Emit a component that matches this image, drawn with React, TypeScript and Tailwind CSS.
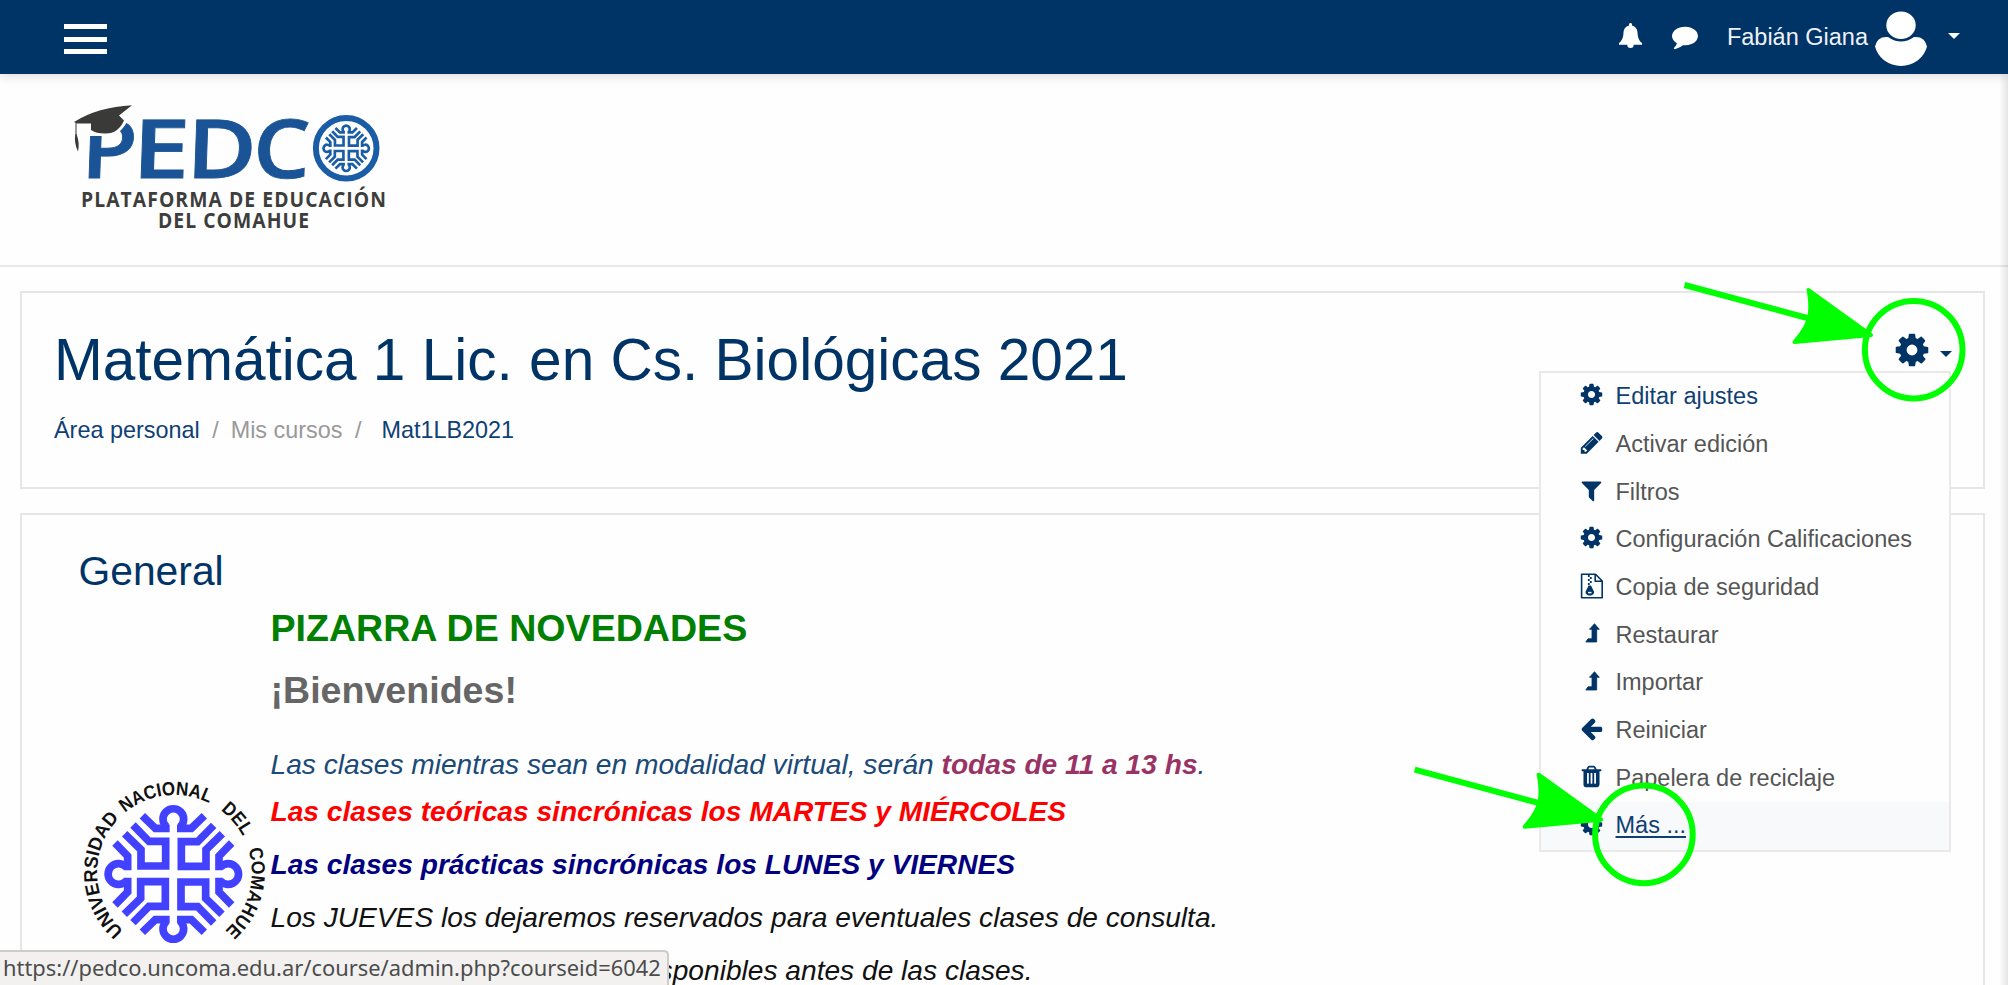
import React from "react";

const COG =
  "M1152 896q0-106-75-181t-181-75-181 75-75 181 75 181 181 75 181-75 75-181zm512-109v222q0 12-8 23t-20 13l-185 28q-19 54-39 91 35 50 107 138 10 12 10 25t-9 23q-27 37-99 108t-94 71q-12 0-26-9l-138-108q-44 23-91 38-16 136-29 186-7 28-36 28h-222q-14 0-24.5-8.5t-11.5-21.5l-28-184q-49-16-90-37l-141 107q-10 9-25 9-14 0-25-11-126-114-165-168-7-10-7-23 0-12 8-23 15-21 51-66.5t54-70.5q-27-50-41-99l-183-27q-13-2-21-12.5t-8-23.5v-222q0-12 8-23t19-13l186-28q14-46 39-92-40-57-107-138-10-12-10-24 0-10 9-23 26-36 98.5-107.5t94.5-71.5q13 0 26 10l138 107q44-23 91-38 16-136 29-186 7-28 36-28h222q14 0 24.5 8.5t11.5 21.5l28 184q49 16 90 37l142-107q9-9 24-9 13 0 25 10 129 119 165 170 7 8 7 22 0 12-8 23-15 21-51 66.5t-54 70.5q26 50 41 98l183 28q13 2 21 12.5t8 23.5z";
const PENCIL =
  "M491 1536l91-91-235-235-91 91v107h128v128h107zm523-928q0-22-22-22-10 0-17 7l-542 542q-7 7-7 17 0 22 22 22 10 0 17-7l542-542q7-7 7-17zm-54-192l416 416-832 832h-416v-416zm683 96q0 53-37 90l-166 166-416-416 166-165q36-38 90-38 53 0 91 38l235 234q37 39 37 91z";
const FILTER =
  "M1595 295q17 41-14 70l-493 493v742q0 42-39 59-13 5-25 5-27 0-45-19l-256-256q-19-19-19-45v-486l-493-493q-31-29-14-70 17-39 59-39h1280q42 0 59 39z";
const ARROW_LEFT =
  "M1664 896v128q0 53-32.5 90.5t-84.5 37.5h-704l293 294q38 36 38 90t-38 90l-75 76q-37 37-90 37-52 0-91-37l-651-652q-37-37-37-90 0-52 37-91l651-650q38-38 91-38 52 0 90 38l75 74q38 38 38 91t-38 91l-293 293h704q52 0 84.5 37.5t32.5 90.5z";
const TRASH =
  "M704 1376v-704q0-14-9-23t-23-9h-64q-14 0-23 9t-9 23v704q0 14 9 23t23 9h64q14 0 23-9t9-23zm256 0v-704q0-14-9-23t-23-9h-64q-14 0-23 9t-9 23v704q0 14 9 23t23 9h64q14 0 23-9t9-23zm256 0v-704q0-14-9-23t-23-9h-64q-14 0-23 9t-9 23v704q0 14 9 23t23 9h64q14 0 23-9t9-23zm-544-992h448l-48-117q-7-9-17-11h-317q-10 2-17 11zm928 32v64q0 14-9 23t-23 9h-96v948q0 83-47 143.5t-113 60.5h-832q-66 0-113-58.5t-47-141.5v-952h-96q-14 0-23-9t-9-23v-64q0-14 9-23t23-9h309l70-167q15-37 54-63t79-26h320q40 0 79 26t54 63l70 167h309q14 0 23 9t9 23z";
const COMMENT =
  "M1792 896q0 174-120 321.5t-326 233-450 85.5q-70 0-145-8-198 175-460 242-49 14-114 22-17 2-30.5-9t-17.5-29v-1q-3-4-.5-12t2-10 4.5-9.5l6-9 7-8.5 8-9q7-8 31-34.5t34.5-38 31-39.5 32.5-51 27-59 26-76q-157-89-247.5-220t-90.5-281q0-130 71-248.5t191-204.5 286-136.5 348-50.5q244 0 450 85.5t326 233 120 321.5z";

function Glyph({ d, className }: { d: string; className: string }) {
  return (
    <svg viewBox="0 0 1792 1792" className={className} fill="currentColor" aria-hidden="true">
      <path d={d} />
    </svg>
  );
}

function LevelUpIcon() {
  return (
    <svg viewBox="0 0 16 20" className="ml-[3px] h-5 w-4" fill="currentColor" aria-hidden="true">
      <path
        d="M9.500 .7L14.300 6.300H11.700V19H.8L3 15.800H7V6.300H4.500Z"
        stroke="currentColor"
        strokeWidth=".8"
        strokeLinejoin="round"
      />
    </svg>
  );
}

function ZipIcon() {
  return (
    <svg viewBox="0 0 24 26" className="h-[26px] w-6" fill="none" stroke="currentColor" strokeWidth="1.6" aria-hidden="true">
      <path d="M1.6 1.3H15.5L22.2 8V24.7H1.6Z M15.2 1.5V8.3H22" strokeLinejoin="round" />
      <path d="M8.8 2v2M10.8 4v2M8.8 6v2M10.8 8v2M8.8 10v2" strokeWidth="1.8" />
      <path d="M8.600 12.600h2.400l2.800 5.600c.9 2.600-1.200 4.200-4 4.200s-4.900-1.600-4-4.200z" fill="currentColor" stroke="none" />
      <path d="M8.100 19.600h3.400" stroke="#fff" strokeWidth="1.500" />
    </svg>
  );
}

/** The university's four-fold cross, drawn around the origin in a 416-unit square. */
function Cross({ color }: { color: string }) {
  return (
    <g fill="none" stroke={color} strokeWidth="23">
      {[0, 90, 180, 270].map((a) => (
        <g key={a} transform={`rotate(${a})`}>
          <path d="M-121 -147 L-73 -98 H-23 V-24 H-97 V-73 L-146 -121" />
          <path d="M-93 -175 L-54 -137 H-11" />
          <path d="M93 -175 L54 -137 H11" />
          <path d="M-20 -141 A31 31 0 1 1 20 -141" />
        </g>
      ))}
    </g>
  );
}

function PedcoLogo() {
  return (
    <svg viewBox="70 75 330 175" className="h-[175px] w-[330px]" role="img" aria-label="PEDCO">
      <g
        fill="#1b5496"
        stroke="#1b5496"
        strokeWidth=".8"
        fontFamily="'Open Sans', 'Noto Sans', sans-serif"
        fontWeight="600"
        fontSize="81.500"
      >
        <text transform="translate(80.500 178) skewX(-2)" textLength="56" lengthAdjust="spacingAndGlyphs">P</text>
        <text transform="translate(131.500 178) skewX(-2)" textLength="57.500" lengthAdjust="spacingAndGlyphs">E</text>
        <text transform="translate(185.700 178) skewX(-2)" textLength="70" lengthAdjust="spacingAndGlyphs">D</text>
        <text transform="translate(252.300 178) skewX(-2)" textLength="57" lengthAdjust="spacingAndGlyphs">C</text>
      </g>
      <path d="M76 100H137L127 122Q118 138 104 136H76Z" fill="#fefefe" />
      <path d="M103 134H106V146H103Z" fill="#fefefe" />
      <path d="M74 122Q98 107 132 105.300L119 115.500L124 120.500Q118 134 105 133.500Q96 133.500 91 130V123.500H77Z" fill="#3a3a39" />
      <path d="M76 123V136" stroke="#3a3a39" strokeWidth="1" />
      <path d="M75.500 134Q73.500 142 78 151.500Q80 143 76.500 134Z" fill="#3a3a39" />
      <circle cx="346.200" cy="148.300" r="30.300" fill="#fff" stroke="#1b5ca6" strokeWidth="6" />
      <g transform="translate(346.200 148.300) scale(.116)">
        <Cross color="#1b5ca6" />
      </g>
      <g fill="#3d3d3c" fontFamily="'Open Sans', 'Noto Sans', sans-serif" fontWeight="700" fontSize="22" letterSpacing="1.200">
        <text x="81" y="206.600" textLength="306" lengthAdjust="spacingAndGlyphs">PLATAFORMA DE EDUCACIÓN</text>
        <text x="158" y="227.500" textLength="152" lengthAdjust="spacingAndGlyphs">DEL COMAHUE</text>
      </g>
    </svg>
  );
}

const SEAL_WORDS = [
  { text: "UNIVERSIDAD", offset: 0, length: 379 },
  { text: "NACIONAL", offset: 401, length: 270 },
  { text: "DEL", offset: 711, length: 103 },
  { text: "COMAHUE", offset: 856, length: 270 },
];

function Seal() {
  return (
    <svg viewBox="240 110 564 510" className="ml-[2px] h-[170px] w-[188px]" role="img" aria-label="Universidad Nacional del Comahue">
      <defs>
        <path id="ring" d="M371 571 A232 232 0 1 1 680 567" />
      </defs>
      <g transform="translate(520 401)">
        <Cross color="#4141ff" />
      </g>
      <g fill="#111" fontFamily="'Liberation Sans', Arial, sans-serif" fontWeight="700" fontSize="57">
        {SEAL_WORDS.map((w) => (
          <text key={w.text} textLength={w.length} lengthAdjust="spacingAndGlyphs">
            <textPath href="#ring" startOffset={w.offset} textLength={w.length} lengthAdjust="spacingAndGlyphs">
              {w.text}
            </textPath>
          </text>
        ))}
      </g>
    </svg>
  );
}

const MENU: { label: string; icon: React.ReactNode; link?: boolean; active?: boolean }[] = [
  { label: "Editar ajustes", icon: <Glyph d={COG} className="size-[25px]" />, link: true },
  { label: "Activar edición", icon: <Glyph d={PENCIL} className="size-[25.500px]" /> },
  { label: "Filtros", icon: <Glyph d={FILTER} className="size-[25px]" /> },
  { label: "Configuración Calificaciones", icon: <Glyph d={COG} className="size-[25px]" /> },
  { label: "Copia de seguridad", icon: <ZipIcon /> },
  { label: "Restaurar", icon: <LevelUpIcon /> },
  { label: "Importar", icon: <LevelUpIcon /> },
  { label: "Reiniciar", icon: <Glyph d={ARROW_LEFT} className="size-[25px]" /> },
  { label: "Papelera de reciclaje", icon: <Glyph d={TRASH} className="size-[25px]" /> },
  { label: "Más ...", icon: <Glyph d={COG} className="size-[25px]" />, link: true, active: true },
];

function SettingsMenu() {
  return (
    <ul className="absolute top-[371px] left-[1539px] w-[412px] border-2 border-[#ebe8e8] bg-[#fefefe] text-[23.5px]">
      {MENU.map((m) => (
        <li
          key={m.label}
          className={
            "flex h-[47.7px] items-center pl-[37.5px] whitespace-nowrap " + (m.active ? "bg-[#f8f9fb]" : "")
          }
        >
          <span className="flex w-[26px] justify-center pb-1 text-[#003366]">{m.icon}</span>
          <span
            className={
              "ml-[11px] " +
              (m.link ? "text-[#0f4074] " : "text-[#555] ") +
              (m.active ? "underline decoration-2 underline-offset-[3px]" : "")
            }
          >
            {m.label}
          </span>
        </li>
      ))}
    </ul>
  );
}

function Pointer() {
  return (
    <g stroke="#00ff00" strokeWidth="6" strokeLinejoin="round">
      <path d="M1684.500 285 L1811 319" fill="none" />
      <path
        d="M1808.500 290 L1871 335 L1794.500 342 Q1809 326 1810 313 Q1811 301 1808.500 290Z"
        fill="#00ff00"
        strokeWidth="4"
      />
      <circle cx="1913.700" cy="349.700" r="48.800" fill="none" />
    </g>
  );
}

export default function App() {
  return (
    <div className="relative flex h-[985px] w-[2008px] flex-col overflow-hidden bg-[#fefefe] font-['Liberation_Sans',Arial,sans-serif]">
      <nav className="relative z-10 flex h-[74px] shrink-0 items-center justify-between bg-[#003366] pr-12 pl-16 shadow-[0_2px_10px_rgba(0,0,0,0.14)]">
        <button className="mt-1 flex h-[30px] w-[43px] flex-col justify-between" aria-label="Menú">
          <span className="h-[5px] w-full bg-white" />
          <span className="h-[5px] w-full bg-white" />
          <span className="h-[5px] w-full bg-white" />
        </button>
        <div className="flex items-center text-white">
          <svg viewBox="0 0 23 25" className="mr-[30px] mb-1 h-[25px] w-[23px]" fill="currentColor" aria-hidden="true">
            <path d="M11.500 0c.9 0 1.500.6 1.500 1.500v.9c3.500.7 5.300 3.400 5.500 6.800.2 5.600 1.500 8.300 4.500 10.900v1.700h-8.300a3.200 3.200 0 0 1-6.400 0H0v-1.700c3-2.600 4.300-5.300 4.500-10.900.2-3.400 2-6.100 5.500-6.800v-.9C10 .6 10.600 0 11.500 0z" />
          </svg>
          <Glyph d={COMMENT} className="mr-[28.5px] mb-[2px] size-[26px]" />
          <span className="text-[23.5px] leading-9 text-[#eef2f6]">Fabián Giana</span>
          <svg viewBox="0 0 52 55" className="mt-0.5 ml-[7px] h-[55px] w-[52px]" fill="currentColor" aria-hidden="true">
            <ellipse cx="26" cy="14.200" rx="14.700" ry="13.700" />
            <path d="M13 26Q26 35.200 39 26Q50 25 52 35.600Q50 43.600 43 49.300Q35 55 26 55Q17 55 9 49.300Q2 43.600 0 35.600Q2 25 13 26Z" />
          </svg>
          <svg viewBox="0 0 12 6" className="mb-[3px] ml-[21px] h-[6px] w-3" fill="currentColor" aria-hidden="true">
            <path d="M0 0H12L6 6Z" />
          </svg>
        </div>
      </nav>

      <header className="h-[193px] shrink-0 border-b-2 border-[#ebe7e8] pt-px pl-[70px]">
        <PedcoLogo />
      </header>

      <main className="flex grow flex-col pt-6 pr-[23px] pl-[20px]">
        <section className="flex h-[198px] shrink-0 justify-between border-2 border-[#e6e6e6] pt-[32px] pl-[32px]">
          <div>
            <h1 className="text-[58.55px] leading-[70px] text-[#003366]">Matemática 1 Lic. en Cs. Biológicas 2021</h1>
            <div className="mt-[17px] flex text-[23.4px] leading-9">
              <a className="text-[#0f4074]">Área personal</a>
              <span className="ml-[12.5px] text-[#999]">/</span>
              <span className="ml-3 text-[#999]">Mis cursos</span>
              <span className="ml-[12.5px] text-[#999]">/</span>
              <a className="ml-5 text-[#0f4074]">Mat1LB2021</a>
            </div>
          </div>
          <div className="mr-[31.5px] flex h-[50px] items-center text-[#003366]">
            <Glyph d={COG} className="size-[38px]" />
            <svg viewBox="0 0 12 6" className="mt-2 ml-[9px] h-[6px] w-3" fill="currentColor" aria-hidden="true">
              <path d="M0 0H12L6 6Z" />
            </svg>
          </div>
        </section>

        <section className="mt-[24px] grow border-2 border-b-0 border-[#e6e6e6] pt-[32px] pl-[56px]">
          <h2 className="pl-[0.5px] text-[40.8px] leading-[48px] text-[#003366]">General</h2>
          <div className="flex">
            <div className="w-[192.5px] shrink-0 pt-[182px]">
              <Seal />
            </div>
            <div className="pt-[10px] whitespace-nowrap">
              <p className="text-[37.6px] leading-[46px] font-bold text-[#008000]">PIZARRA DE NOVEDADES</p>
              <p className="mt-[16px] text-[37.6px] leading-[46px] font-bold text-[#666]">¡Bienvenides!</p>
              <div className="mt-[31px] text-[28.15px] leading-[42px] italic">
                <p className="text-[#1a4a78]">
                  Las clases mientras sean en modalidad virtual, serán{" "}
                  <b className="text-[#993366]">todas de 11 a 13 hs</b>.
                </p>
                <p className="mt-[5px] font-bold text-[#ff0000]">
                  Las clases teóricas sincrónicas los MARTES y MIÉRCOLES
                </p>
                <p className="mt-[11px] font-bold text-[#000080]">
                  Las clases prácticas sincrónicas los LUNES y VIERNES
                </p>
                <p className="mt-[11px] text-[#111]">
                  Los JUEVES los dejaremos reservados para eventuales clases de consulta.
                </p>
                <p className="mt-[11px] w-[762px] text-right text-[#111]">disponibles antes de las clases.</p>
              </div>
            </div>
          </div>
        </section>
      </main>

      <SettingsMenu />

      <div className="absolute top-[74px] right-0 h-[911px] w-[9px] bg-linear-to-r from-transparent to-black/10" />

      <div className="absolute bottom-0 left-0 flex h-[35px] w-[669px] items-center rounded-tr-[5px] border-t-2 border-r-2 border-[#cfccc8] bg-[#f2f1f0] pl-[3px] font-['Noto_Sans','Open_Sans',sans-serif] text-[21.9px] whitespace-nowrap text-[#4c4c4c]">
        https://pedco.uncoma.edu.ar/course/admin.php?courseid=6042
      </div>

      <svg viewBox="0 0 2008 985" className="pointer-events-none absolute top-0 left-0 h-[985px] w-[2008px]" aria-hidden="true">
        <Pointer />
        <g transform="translate(-269.800 484.700)">
          <Pointer />
        </g>
      </svg>
    </div>
  );
}
